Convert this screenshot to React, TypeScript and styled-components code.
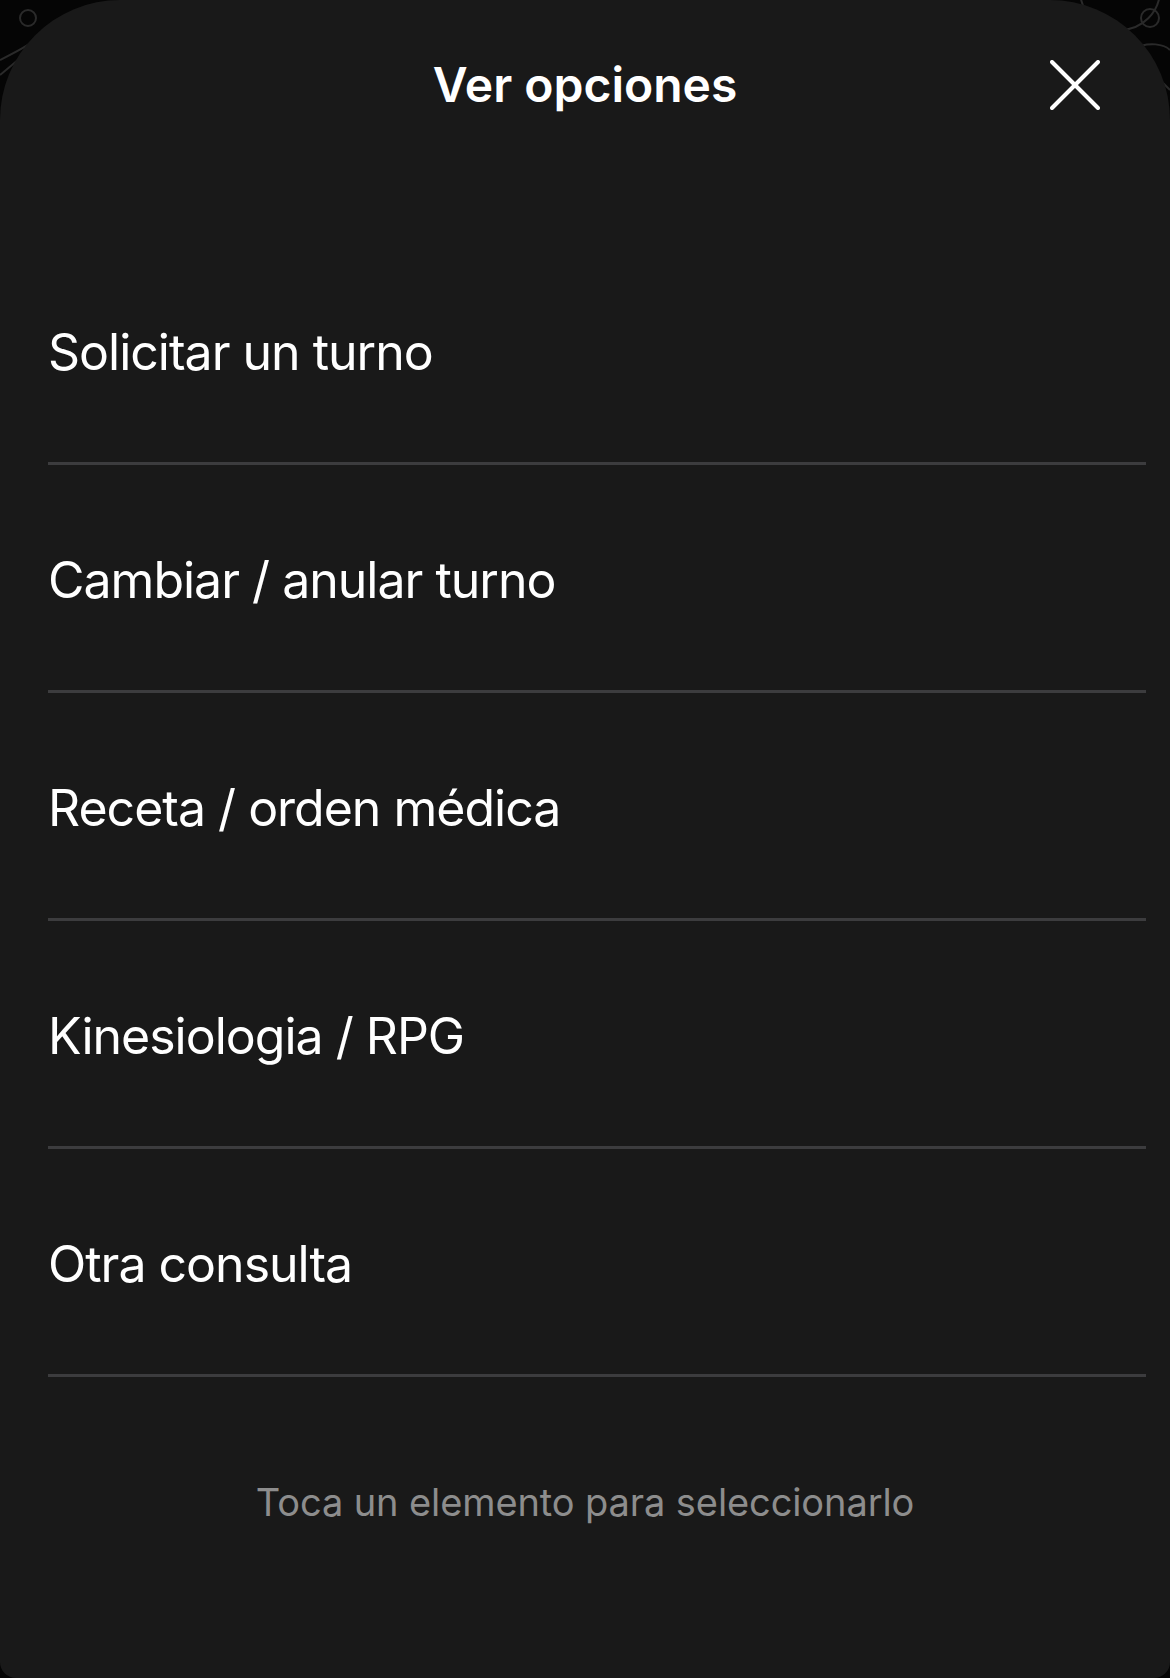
import React from "react";
import styled, { createGlobalStyle } from "styled-components";

const Global = createGlobalStyle`
  html, body {
    margin: 0;
    padding: 0;
    background: #000;
  }
  body {
    font-family: Inter, "Noto Sans", "Liberation Sans", sans-serif;
    -webkit-font-smoothing: antialiased;
  }
  #root { min-height: 1678px; }
`;

const Screen = styled.div`
  position: relative;
  width: 1170px;
  height: 1678px;
  background: #050505;
  overflow: hidden;
`;

const Backdrop = styled.svg`
  position: absolute;
  inset: 0;
  width: 1170px;
  height: 300px;
`;

const Sheet = styled.div`
  position: relative;
  height: 1678px;
  box-sizing: border-box;
  background: #191919;
  border-radius: 120px 120px 16px 16px;
  display: flex;
  flex-direction: column;
`;

const Header = styled.header`
  display: grid;
  grid-template-columns: 1fr auto 1fr;
  align-items: center;
  height: 170px;
`;

const Title = styled.h1`
  grid-column: 2;
  margin: 0;
  color: #ffffff;
  font-size: 48px;
  line-height: 56px;
  font-weight: 600;
  letter-spacing: 0px;
`;

const CloseButton = styled.button`
  grid-column: 3;
  justify-self: end;
  margin-right: 70px;
  width: 50px;
  height: 50px;
  padding: 0;
  border: 0;
  background: transparent;
  display: flex;
  align-items: center;
  justify-content: center;
  cursor: pointer;
`;

const List = styled.ul`
  list-style: none;
  margin: 67px 0 0 0;
  padding: 0;
`;

const Row = styled.li`
  height: 228px;
  box-sizing: border-box;
  margin: 0 24px 0 48px;
  border-bottom: 3px solid #3c3c3e;
  display: flex;
  align-items: center;
  color: #ffffff;
  font-size: 50px;
  line-height: 60px;
  font-weight: 400;
  letter-spacing: -1px;
  padding-top: 4px;
`;

const Hint = styled.p`
  margin: 0;
  padding-top: 102px;
  text-align: center;
  color: #8d8d8d;
  font-size: 38px;
  line-height: 46px;
  font-weight: 400;
  letter-spacing: -0.1px;
`;

const items = [
  "Solicitar un turno",
  "Cambiar / anular turno",
  "Receta / orden médica",
  "Kinesiologia / RPG",
  "Otra consulta",
];

export default function App() {
  return (
    <>
      <Global />
      <Screen>
        <Backdrop viewBox="0 0 1170 300" fill="none" stroke="#2a2a2a" strokeWidth="2">
          <circle cx="28" cy="18" r="8" />
          <path d="M0 60 C 20 50, 40 40, 50 25" />
          <path d="M0 75 L 18 60" />
          <circle cx="1150" cy="18" r="9" />
          <circle cx="1120" cy="-10" r="40" />
          <path d="M1130 50 C 1150 40, 1165 45, 1170 50" />
          <path d="M1150 70 L 1170 90" />
        </Backdrop>
        <Sheet>
          <Header>
            <Title>Ver opciones</Title>
            <CloseButton aria-label="Cerrar">
              <svg width="50" height="50" viewBox="0 0 50 50" fill="none" stroke="#ffffff" strokeWidth="4" strokeLinecap="round">
                <path d="M2 2 L48 48" />
                <path d="M48 2 L2 48" />
              </svg>
            </CloseButton>
          </Header>
          <List>
            {items.map((t) => (
              <Row key={t}>{t}</Row>
            ))}
          </List>
          <Hint>Toca un elemento para seleccionarlo</Hint>
        </Sheet>
      </Screen>
    </>
  );
}
